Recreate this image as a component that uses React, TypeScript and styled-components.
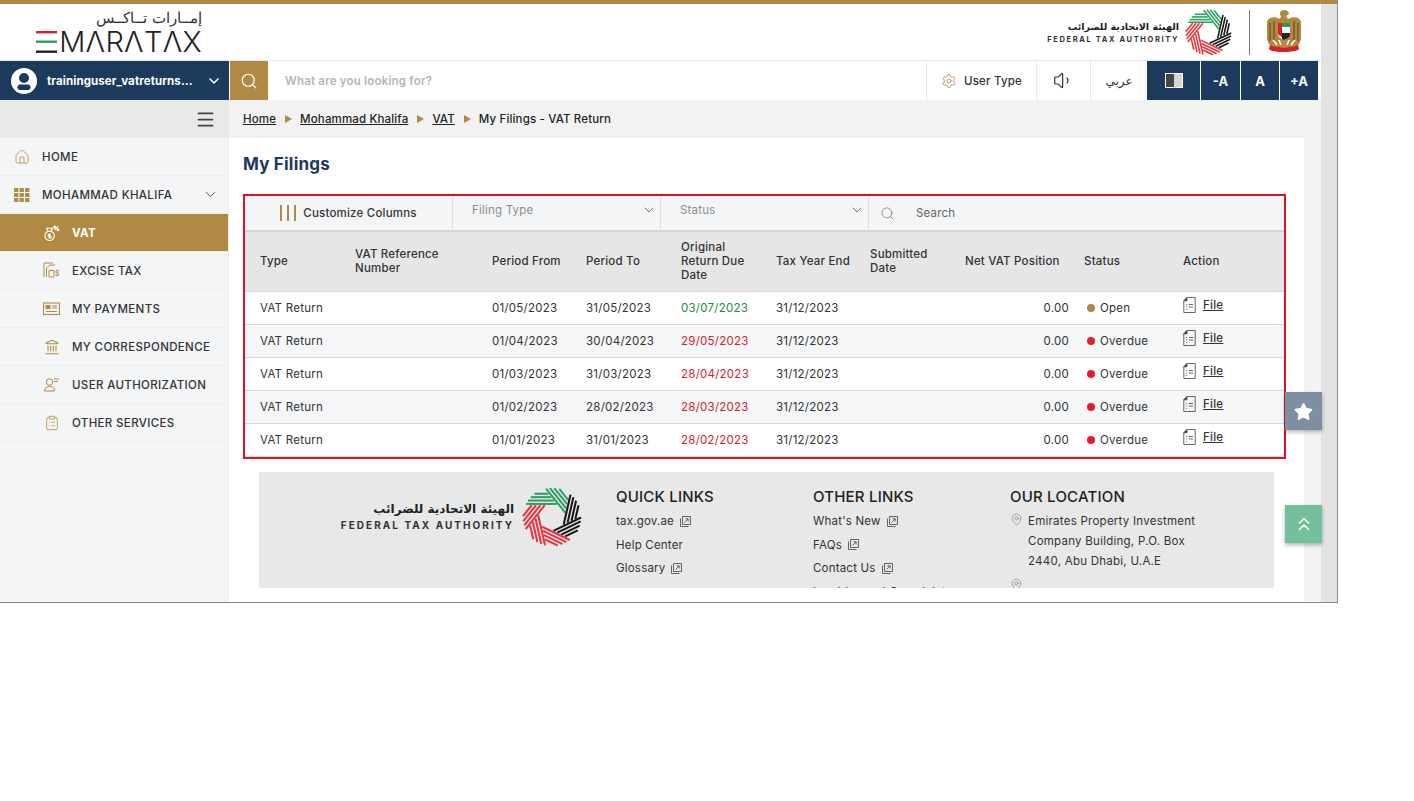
import * as React from 'react';
import styled, { createGlobalStyle } from 'styled-components';
import { Search, ChevronDown, Menu, Home, Settings, Volume1, Landmark, ClipboardList, MapPin, ChevronsUp } from 'lucide-react';
import { FaStar } from 'react-icons/fa';

const GOLD = '#b08a44';
const NAVY = '#1b3a5c';

const GlobalStyle = createGlobalStyle`
  html, body { margin: 0; padding: 0; background: #fff; }
  body { font-family: Inter, "Noto Sans", "DejaVu Sans", sans-serif; color: #333; }
  * { box-sizing: border-box; }
`;

const Shell = styled.div`
  position: relative;
  width: 1338px;
  height: 603px;
  display: flex;
  flex-direction: column;
  overflow: hidden;
  border-right: 1px solid #8a8a8a;
  border-bottom: 1px solid #8a8a8a;
`;

const TopBand = styled.div`
  height: 4px;
  flex: none;
  background: ${GOLD};
`;

const Frame = styled.div`
  flex: 1;
  min-height: 0;
  display: flex;
`;

const Page = styled.div`
  width: 1321px;
  display: flex;
  flex-direction: column;
`;

const Gutter = styled.div`
  flex: 1;
  background: #e3e3e3;
`;

const Header = styled.header`
  height: 57px;
  flex: none;
  display: flex;
  align-items: center;
  justify-content: space-between;
  background: #fff;
  border-bottom: 1px solid #e8e8e8;
  padding: 0 19px 0 28px;
`;

const BrandLogo = styled.div`
  width: 174px;
  display: flex;
  flex-direction: column;
  align-items: flex-end;
`;

const BrandArabic = styled.span`
  font-family: "DejaVu Sans", sans-serif;
  font-size: 15px;
  font-weight: 300;
  line-height: 20px;
  color: #333;
  margin-right: 0;
`;

const BrandLatin = styled.div`
  display: flex;
  align-items: center;
  gap: 2px;
  line-height: 28px;
`;

const BrandBars = styled.svg`
  width: 21px;
  height: 22px;
  flex: none;
`;

const BrandWord = styled.span`
  font-size: 29px;
  font-weight: 300;
  color: #222;
  letter-spacing: 0.3px;
`;

const HeaderRight = styled.div`
  display: flex;
  align-items: center;
`;

const AuthorityText = styled.div<{ $large?: boolean }>`
  display: flex;
  flex-direction: column;
  align-items: flex-end;
  line-height: 1;
  gap: ${p => (p.$large ? '4px' : '3px')};
  margin-right: ${p => (p.$large ? '8px' : '6px')};
`;

const AuthorityArabic = styled.span<{ $large?: boolean }>`
  font-family: "DejaVu Sans", sans-serif;
  font-weight: 700;
  font-size: ${p => (p.$large ? '12px' : '9.5px')};
  color: #222;
  line-height: 13px;
  white-space: nowrap;
`;

const AuthorityLatin = styled.span<{ $large?: boolean }>`
  font-weight: 700;
  font-size: ${p => (p.$large ? '10px' : '7.5px')};
  letter-spacing: ${p => (p.$large ? '2.05px' : '1.62px')};
  color: #333;
  white-space: nowrap;
`;

const Divider = styled.div`
  width: 1px;
  height: 45px;
  background: #777;
  margin: 0 16px 0 17px;
`;

const NavRow = styled.nav`
  height: 39px;
  flex: none;
  display: flex;
  background: #fff;
`;

const UserMenu = styled.div`
  width: 229px;
  display: flex;
  align-items: center;
  background: ${NAVY};
  color: #fff;
  padding: 0 7px 0 11px;
`;

const UserName = styled.span`
  flex: 1;
  margin-left: 10px;
  font-size: 11.5px;
  font-weight: 700;
  letter-spacing: 0.1px;
  white-space: nowrap;
`;

const SearchButton = styled.div`
  width: 38px;
  margin-left: 1px;
  display: flex;
  align-items: center;
  justify-content: center;
  background: ${GOLD};
  color: #fff;
`;

const SearchInput = styled.div`
  flex: 1;
  display: flex;
  align-items: center;
  padding-left: 17px;
  font-size: 11.5px;
  font-weight: 600;
  color: #b5b5b5;
  letter-spacing: 0.2px;
`;

const NavCell = styled.div<{ $w: number }>`
  width: ${p => p.$w}px;
  display: flex;
  align-items: center;
  justify-content: center;
  gap: 7px;
  border-left: 1px solid #e8e8e8;
  font-size: 11.5px;
  font-weight: 500;
  letter-spacing: 0.2px;
  color: #333;
`;

const NavArabic = styled.span`
  font-family: "DejaVu Sans", sans-serif;
  font-size: 12px;
`;

const DarkCell = styled.div<{ $w: number }>`
  width: ${p => p.$w}px;
  margin-left: 1px;
  display: flex;
  align-items: center;
  justify-content: center;
  background: ${NAVY};
  color: #fff;
  font-size: 13px;
  font-weight: 700;
`;

const ContrastIcon = styled.div`
  width: 18px;
  height: 15px;
  background: linear-gradient(90deg, #444 0 50%, #d5d5d5 50% 100%);
  border: 1px solid #fff;
`;

const SpacerCell = styled.div`
  width: 3px;
  background: #fff;
`;

const Body = styled.div`
  flex: 1;
  min-height: 0;
  display: flex;
`;

const Sidebar = styled.aside`
  width: 229px;
  flex: none;
  background: #f4f5f6;
  border-right: 1px solid #ececec;
`;

const SidebarToggle = styled.div`
  height: 38px;
  display: flex;
  align-items: center;
  justify-content: flex-end;
  padding-right: 12px;
  background: #e9e9e9;
  color: #444;
`;

const MenuItem = styled.div<{ $sub?: boolean; $active?: boolean }>`
  height: 38px;
  display: flex;
  align-items: center;
  padding-left: ${p => (p.$sub ? '43px' : '13px')};
  padding-right: 9px;
  border-bottom: 1px solid #ebecec;
  background: ${p => (p.$active ? GOLD : 'transparent')};
  color: ${p => (p.$active ? '#fff' : '#333')};
  font-size: 11.5px;
  font-weight: ${p => (p.$active ? 700 : 500)};
  letter-spacing: 0.35px;
  white-space: nowrap;
`;

const MenuIcon = styled.span<{ $sub?: boolean }>`
  width: 17px;
  height: 17px;
  margin-right: ${p => (p.$sub ? '12px' : '12px')};
  flex: none;
  display: flex;
  align-items: center;
  justify-content: center;
`;

const MenuLabel = styled.span`
  flex: 1;
`;

const Main = styled.main`
  flex: 1;
  min-width: 0;
  display: flex;
  flex-direction: column;
`;

const Breadcrumb = styled.div`
  height: 38px;
  flex: none;
  display: flex;
  align-items: center;
  padding-left: 14px;
  background: #f2f2f2;
  font-size: 11.5px;
  font-weight: 500;
  letter-spacing: 0.15px;
  color: #222;
`;

const CrumbLink = styled.a`
  color: #222;
  text-decoration: underline;
`;

const CrumbArrow = styled.span`
  width: 0;
  height: 0;
  margin: 0 8px 0 9px;
  border-left: 7px solid ${GOLD};
  border-top: 4px solid transparent;
  border-bottom: 4px solid transparent;
`;

const ContentRow = styled.div`
  flex: 1;
  min-height: 0;
  display: flex;
`;

const Content = styled.div`
  width: 1075px;
  background: #fff;
  overflow: hidden;
`;

const SideStrip = styled.div`
  flex: 1;
  background: #f3f3f3;
`;

const Title = styled.h1`
  margin: 14px 0 18px 14px;
  font-size: 17px;
  line-height: 24px;
  font-weight: 700;
  letter-spacing: 0.2px;
  color: ${NAVY};
`;

const FilingsBox = styled.section`
  width: 1043px;
  margin-left: 14px;
  border: 2px solid #d9151f;
`;

const Toolbar = styled.div`
  height: 36px;
  display: flex;
  background: #f3f5f7;
  border-bottom: 2px solid #d3d7da;
`;

const ToolCell = styled.div<{ $w: number }>`
  width: ${p => p.$w}px;
  display: flex;
  align-items: center;
  justify-content: center;
  gap: 7px;
  border-right: 1px solid #dcdfe2;
  font-size: 11.5px;
  font-weight: 500;
  letter-spacing: 0.2px;
  color: #333;
`;

const ColumnsIcon = styled.span`
  width: 16px;
  height: 16px;
  background: repeating-linear-gradient(90deg, ${GOLD} 0 2px, transparent 2px 7px);
`;

const SelectCell = styled.div<{ $w: number }>`
  width: ${p => p.$w}px;
  display: flex;
  align-items: center;
  justify-content: space-between;
  padding: 0 3px 6px 19px;
  border-right: 1px solid #dcdfe2;
  font-size: 11.5px;
  letter-spacing: 0.2px;
  color: #8d8d8d;
`;

const SearchCell = styled.div`
  flex: 1;
  display: flex;
  align-items: center;
  padding-left: 11px;
  font-size: 11.5px;
  letter-spacing: 0.2px;
  color: #666;
`;

const SearchLabel = styled.span`
  margin-left: 21px;
`;

const Table = styled.table`
  width: 1039px;
  table-layout: fixed;
  border-collapse: collapse;
`;

const HeadRow = styled.tr`
  height: 59px;
  background: #e6e6e6;
`;

const Th = styled.th`
  padding: 0 0 0 15px;
  text-align: left;
  font-size: 11.5px;
  line-height: 14px;
  font-weight: 500;
  letter-spacing: 0.2px;
  color: #333;
  border-bottom: 1px solid #d8d8d8;
`;

const Row = styled.tr<{ $alt: boolean }>`
  height: 33px;
  background: ${p => (p.$alt ? '#f5f6f7' : '#fff')};
  border-bottom: 1px solid #d8d8d8;
`;

const Td = styled.td<{ $tone?: 'green' | 'red'; $right?: boolean }>`
  padding: ${p => (p.$right ? '0' : '0 0 0 15px')};
  text-align: ${p => (p.$right ? 'right' : 'left')};
  font-size: 11.5px;
  font-weight: 400;
  letter-spacing: 0.25px;
  color: ${p => (p.$tone === 'green' ? '#1e8a46' : p.$tone === 'red' ? '#d3222c' : '#333')};
`;

const StatusDot = styled.span<{ $open: boolean }>`
  display: inline-block;
  width: 8px;
  height: 8px;
  margin: 0 5px 0 3px;
  border-radius: 50%;
  background: ${p => (p.$open ? GOLD : '#e31e2b')};
`;

const FileAction = styled.a`
  display: inline-flex;
  align-items: center;
  gap: 7px;
  color: #333;
  position: relative;
  top: -1px;
`;

const FileLabel = styled.span`
  text-decoration: underline;
  font-weight: 500;
`;

const Footer = styled.footer`
  width: 1015px;
  height: 116px;
  margin: 13px 0 0 30px;
  display: flex;
  overflow: hidden;
  background: #e8e8e8;
`;

const FooterLogo = styled.div`
  width: 323px;
  height: 90px;
  flex: none;
  display: flex;
  align-items: center;
  justify-content: flex-end;
`;

const FooterColumn = styled.div`
  width: 197px;
  flex: none;
  padding-top: 16px;
  margin-left: ${p => (p.theme?.first ? '34px' : '0')};
`;

const FirstColumn = styled(FooterColumn)`
  margin-left: 34px;
`;

const FooterHeading = styled.h3`
  margin: 0 0 4px;
  font-size: 15px;
  line-height: 18px;
  font-weight: 500;
  letter-spacing: 0.2px;
  color: #222;
`;

const FooterLink = styled.div`
  display: flex;
  align-items: center;
  gap: 5px;
  height: 23.6px;
  font-size: 11.5px;
  letter-spacing: 0.2px;
  color: #333;
`;

const LocationRow = styled.div`
  display: flex;
  gap: 7px;
  margin: 5px 0 0 0;
  font-size: 11.5px;
  line-height: 20px;
  letter-spacing: 0.25px;
  color: #333;
`;

const PinIcon = styled.span`
  width: 11px;
  flex: none;
  color: #666;
  margin-top: 1px;
`;

const FloatButton = styled.div<{ $top: number; $bg: string }>`
  position: absolute;
  top: ${p => p.$top}px;
  left: 1285px;
  width: 37px;
  height: 38px;
  display: flex;
  align-items: center;
  justify-content: center;
  background: ${p => p.$bg};
  color: #fff;
  box-shadow: 0 2px 4px rgba(0, 0, 0, 0.3);
`;

// pinwheel of the authority logo: seven bands of parallel stripes
const RingLogo = ({ size }: { size: number }) => {
  const colours = ['#2f9e62', '#2f9e62', '#161616', '#161616', '#e5343f', '#e5343f', '#e5343f'];
  const step = (2 * Math.PI) / 7;
  const radius = 30;
  const inner = 13;
  const offsets = [13.5, 17, 20.5, 24];
  return (
    <svg width={size} height={size} viewBox="-31 -31 62 62">
      {colours.map((colour, i) => (
        <g key={i} transform={`rotate(${(i * 360) / 7})`}>
          {offsets.map(d => {
            const right = (inner - d * Math.cos(step)) / Math.sin(step) - 1;
            const left = -Math.sqrt(radius * radius - d * d);
            return <line key={d} x1={left} x2={right} y1={-d} y2={-d} stroke={colour} strokeWidth={2.1} />;
          })}
        </g>
      ))}
    </svg>
  );
};

const Emblem = () => (
  <svg width="36" height="46" viewBox="0 0 36 46">
    <path d="M18 1c3 0 5 2 5 4l-3 2 2 3c6-3 12-2 13 3v17c-1 4-3 7-5 8H6c-2-1-4-4-5-8V13c1-5 7-6 13-3l1-3c-2-1-1-6 3-6z" fill="#b0893f" />
    <path d="M4 14v18M8 12v22M28 12v22M32 14v18" stroke="#6e5a2a" strokeWidth="1.4" />
    <path d="M12 14h12v11c0 3-3 5-6 6-3-1-6-3-6-6z" fill="#fff" />
    <path d="M12 14h4v14c-2-1-4-2-4-4z" fill="#d2232a" />
    <path d="M16 18h8v-4h-8z" fill="#239e57" />
    <path d="M16 24h8v2c0 2-3 4-6 5l-2-1z" fill="#222" />
    <path d="M4 36c5 3 23 3 28 0l1 4c-2 4-28 4-30 0z" fill="#d2232a" />
    <path d="M7 31l4 5M13 31l2 5M23 31l-2 5M29 31l-4 5" stroke="#fff" strokeWidth="1.5" />
  </svg>
);

const Avatar = () => (
  <svg width="26" height="26" viewBox="0 0 26 26">
    <circle cx="13" cy="13" r="13" fill="#fff" />
    <circle cx="13" cy="10" r="5" fill={NAVY} />
    <rect x="6.5" y="16.5" width="13" height="5.5" rx="2.7" fill={NAVY} />
  </svg>
);

const ExternalIcon = () => (
  <svg width="13" height="13" viewBox="0 0 13 13" fill="none" stroke="#555" strokeWidth="0.9">
    <path d="M3.5 1.5h8v8h-8z" />
    <path d="M1.5 3.5v8h8" />
    <path d="M5.5 7.5l3.5-3.5M6.5 3.8h2.7v2.7" />
  </svg>
);

const DocIcon = () => (
  <svg width="13" height="16" viewBox="0 0 13 16" fill="none" stroke="#555" strokeWidth="0.9">
    <path d="M4 .5h8.2v15H.8V3.8z" />
    <path d="M4 .5v3.3H.8z" fill="#333" />
    <path d="M3.2 7.5h1M3.2 10h1M3.2 12.5h1M6 7.5h4M6 10h4" />
  </svg>
);

const BagIcon = () => (
  <svg width="18" height="18" viewBox="0 0 18 18" fill="none" stroke="#fff" strokeWidth="1.2">
    <circle cx="7" cy="12" r="5" />
    <path d="M5 7l-1-3h6L9 7M7 9.5v5M8.5 10.3H6.3a1 1 0 0 0 0 2h1.4a1 1 0 0 1 0 2H5.5" />
    <path d="M12 6l4-4" />
    <circle cx="12.3" cy="2.6" r="1" fill="#fff" />
    <circle cx="15.8" cy="5.6" r="1" fill="#fff" />
  </svg>
);

const SheetIcon = () => (
  <svg width="17" height="17" viewBox="0 0 17 17" fill="none" stroke={GOLD} strokeWidth="1">
    <path d="M1 15V1h9" />
    <path d="M3.5 15V6L7 3h5" />
    <path d="M6 15V8.5h5V15z" />
    <text x="12" y="14" fontSize="7" fontFamily="Inter" fill={GOLD} stroke="none">$</text>
  </svg>
);

const CardIcon = () => (
  <svg width="17" height="14" viewBox="0 0 17 14" fill="none" stroke={GOLD} strokeWidth="1.1">
    <rect x=".6" y="1" width="15.8" height="11.5" />
    <rect x="3" y="3.5" width="4" height="3" fill={GOLD} />
    <path d="M9 4h5M9 6h5M3 9.5h11" />
  </svg>
);

const AuthIcon = () => (
  <svg width="17" height="17" viewBox="0 0 17 17" fill="none" stroke={GOLD} strokeWidth="1">
    <circle cx="6.5" cy="6" r="3.2" />
    <path d="M1.5 15c0-3 2-4.5 5-4.5s5 1.500 5 4.500z" />
    <path d="M11 3h5M11 5.500h4" />
  </svg>
);

const GridIcon = () => (
  <svg width="16" height="14" viewBox="0 0 16 14" fill={GOLD}>
    {[0, 1, 2].map(r => [0, 1, 2].map(c => <rect key={`${r}${c}`} x={c * 5.5} y={r * 5} width="4.4" height="3.900" rx="0.6" />))}
  </svg>
);

const rows = [
  { from: '01/05/2023', to: '31/05/2023', due: '03/07/2023', open: true },
  { from: '01/04/2023', to: '30/04/2023', due: '29/05/2023', open: false },
  { from: '01/03/2023', to: '31/03/2023', due: '28/04/2023', open: false },
  { from: '01/02/2023', to: '28/02/2023', due: '28/03/2023', open: false },
  { from: '01/01/2023', to: '31/01/2023', due: '28/02/2023', open: false },
];

const columnWidths = [95, 137, 94, 95, 95, 94, 95, 119, 99, 116];

const App = () => (
  <Shell>
    <GlobalStyle />
    <TopBand />
    <Frame>
      <Page>
        <Header>
          <BrandLogo>
            <BrandArabic>إمــارات تــاكــس</BrandArabic>
            <BrandLatin>
              <BrandBars viewBox="0 0 21 22">
                <rect y="0" width="21" height="2.400" fill="#d2232a" />
                <rect y="9.500" width="21" height="2.400" fill="#2f9e62" />
                <rect y="19.500" width="21" height="2.400" fill="#222" />
              </BrandBars>
              <BrandWord>MΛRΛTΛX</BrandWord>
            </BrandLatin>
          </BrandLogo>
          <HeaderRight>
            <AuthorityText>
              <AuthorityArabic>الهيئة الاتحادية للضرائب</AuthorityArabic>
              <AuthorityLatin>FEDERAL TAX AUTHORITY</AuthorityLatin>
            </AuthorityText>
            <RingLogo size={47} />
            <Divider />
            <Emblem />
          </HeaderRight>
        </Header>
        <NavRow>
          <UserMenu>
            <Avatar />
            <UserName>traininguser_vatreturns...</UserName>
            <ChevronDown size={16} strokeWidth={2.4} />
          </UserMenu>
          <SearchButton>
            <Search size={18} strokeWidth={1.6} />
          </SearchButton>
          <SearchInput>What are you looking for?</SearchInput>
          <NavCell $w={110}>
            <Settings size={16} color={GOLD} strokeWidth={1.2} />
            User Type
          </NavCell>
          <NavCell $w={54}>
            <Volume1 size={21} color="#333" strokeWidth={1.4} />
          </NavCell>
          <NavCell $w={57}>
            <NavArabic>عربي</NavArabic>
          </NavCell>
          <DarkCell $w={53} style={{ marginLeft: 0 }}>
            <ContrastIcon />
          </DarkCell>
          <DarkCell $w={39}>-A</DarkCell>
          <DarkCell $w={38}>A</DarkCell>
          <DarkCell $w={38}>+A</DarkCell>
          <SpacerCell />
        </NavRow>
        <Body>
          <Sidebar>
            <SidebarToggle>
              <Menu size={21} strokeWidth={2} />
            </SidebarToggle>
            <MenuItem>
              <MenuIcon><Home size={16} color={GOLD} strokeWidth={1.2} /></MenuIcon>
              <MenuLabel>HOME</MenuLabel>
            </MenuItem>
            <MenuItem>
              <MenuIcon><GridIcon /></MenuIcon>
              <MenuLabel>MOHAMMAD KHALIFA</MenuLabel>
              <ChevronDown size={17} color="#555" strokeWidth={1.4} />
            </MenuItem>
            <MenuItem $sub $active>
              <MenuIcon $sub><BagIcon /></MenuIcon>
              <MenuLabel>VAT</MenuLabel>
            </MenuItem>
            <MenuItem $sub>
              <MenuIcon $sub><SheetIcon /></MenuIcon>
              <MenuLabel>EXCISE TAX</MenuLabel>
            </MenuItem>
            <MenuItem $sub>
              <MenuIcon $sub><CardIcon /></MenuIcon>
              <MenuLabel>MY PAYMENTS</MenuLabel>
            </MenuItem>
            <MenuItem $sub>
              <MenuIcon $sub><Landmark size={16} color={GOLD} strokeWidth={1.6} /></MenuIcon>
              <MenuLabel>MY CORRESPONDENCE</MenuLabel>
            </MenuItem>
            <MenuItem $sub>
              <MenuIcon $sub><AuthIcon /></MenuIcon>
              <MenuLabel>USER AUTHORIZATION</MenuLabel>
            </MenuItem>
            <MenuItem $sub>
              <MenuIcon $sub><ClipboardList size={16} color={GOLD} strokeWidth={1.2} /></MenuIcon>
              <MenuLabel>OTHER SERVICES</MenuLabel>
            </MenuItem>
          </Sidebar>
          <Main>
            <Breadcrumb>
              <CrumbLink>Home</CrumbLink>
              <CrumbArrow />
              <CrumbLink>Mohammad Khalifa</CrumbLink>
              <CrumbArrow />
              <CrumbLink>VAT</CrumbLink>
              <CrumbArrow />
              <span>My Filings - VAT Return</span>
            </Breadcrumb>
            <ContentRow>
              <Content>
                <Title>My Filings</Title>
                <FilingsBox>
                  <Toolbar>
                    <ToolCell $w={208}>
                      <ColumnsIcon />
                      Customize Columns
                    </ToolCell>
                    <SelectCell $w={208}>
                      Filing Type
                      <ChevronDown size={16} color="#555" strokeWidth={1.2} />
                    </SelectCell>
                    <SelectCell $w={208}>
                      Status
                      <ChevronDown size={16} color="#555" strokeWidth={1.2} />
                    </SelectCell>
                    <SearchCell>
                      <Search size={15} color="#666" strokeWidth={1.1} />
                      <SearchLabel>Search</SearchLabel>
                    </SearchCell>
                  </Toolbar>
                  <Table>
                    <colgroup>
                      {columnWidths.map((w, i) => <col key={i} width={w} />)}
                    </colgroup>
                    <thead>
                      <HeadRow>
                        <Th>Type</Th>
                        <Th>VAT Reference<br />Number</Th>
                        <Th>Period From</Th>
                        <Th>Period To</Th>
                        <Th>Original<br />Return Due<br />Date</Th>
                        <Th>Tax Year End</Th>
                        <Th>Submitted<br />Date</Th>
                        <Th>Net VAT Position</Th>
                        <Th>Status</Th>
                        <Th>Action</Th>
                      </HeadRow>
                    </thead>
                    <tbody>
                      {rows.map((row, i) => (
                        <Row key={row.from} $alt={i % 2 === 1}>
                          <Td>VAT Return</Td>
                          <Td />
                          <Td>{row.from}</Td>
                          <Td>{row.to}</Td>
                          <Td $tone={row.open ? 'green' : 'red'}>{row.due}</Td>
                          <Td>31/12/2023</Td>
                          <Td />
                          <Td $right>0.00</Td>
                          <Td>
                            <StatusDot $open={row.open} />
                            {row.open ? 'Open' : 'Overdue'}
                          </Td>
                          <Td>
                            <FileAction>
                              <DocIcon />
                              <FileLabel>File</FileLabel>
                            </FileAction>
                          </Td>
                        </Row>
                      ))}
                    </tbody>
                  </Table>
                </FilingsBox>
                <Footer>
                  <FooterLogo>
                    <AuthorityText $large>
                      <AuthorityArabic $large>الهيئة الاتحادية للضرائب</AuthorityArabic>
                      <AuthorityLatin $large>FEDERAL TAX AUTHORITY</AuthorityLatin>
                    </AuthorityText>
                    <RingLogo size={60} />
                  </FooterLogo>
                  <FirstColumn>
                    <FooterHeading>QUICK LINKS</FooterHeading>
                    <FooterLink>tax.gov.ae <ExternalIcon /></FooterLink>
                    <FooterLink>Help Center</FooterLink>
                    <FooterLink>Glossary <ExternalIcon /></FooterLink>
                  </FirstColumn>
                  <FooterColumn>
                    <FooterHeading>OTHER LINKS</FooterHeading>
                    <FooterLink>What's New <ExternalIcon /></FooterLink>
                    <FooterLink>FAQs <ExternalIcon /></FooterLink>
                    <FooterLink>Contact Us <ExternalIcon /></FooterLink>
                    <FooterLink>Inquiries and Complaints</FooterLink>
                  </FooterColumn>
                  <FooterColumn>
                    <FooterHeading>OUR LOCATION</FooterHeading>
                    <LocationRow>
                      <PinIcon><MapPin size={13} strokeWidth={1} /></PinIcon>
                      <span>Emirates Property Investment<br />Company Building, P.O. Box<br />2440, Abu Dhabi, U.A.E</span>
                    </LocationRow>
                    <LocationRow>
                      <PinIcon><MapPin size={13} strokeWidth={1} /></PinIcon>
                    </LocationRow>
                  </FooterColumn>
                </Footer>
              </Content>
              <SideStrip />
            </ContentRow>
          </Main>
        </Body>
      </Page>
      <Gutter />
    </Frame>
    <FloatButton $top={392} $bg="#7f8fa3"><FaStar size={19} /></FloatButton>
    <FloatButton $top={505} $bg="#73c09c"><ChevronsUp size={22} strokeWidth={1.6} /></FloatButton>
  </Shell>
);

export default App;
